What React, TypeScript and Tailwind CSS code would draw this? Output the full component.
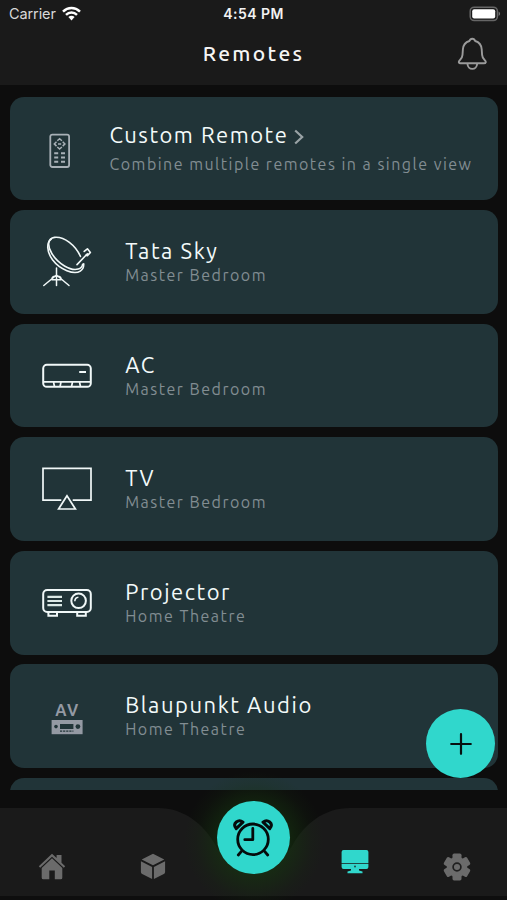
import type { ReactNode } from "react";

const teal = "#30d7cc";

function RemoteIcon() {
  return (
    <svg className="mt-1.5" width="22" height="36" viewBox="0 0 22 36" fill="none" stroke="#a8b0b6" strokeWidth="1.8">
      <rect x="1.300" y="1.600" width="18.800" height="32.400" rx="2" />
      <path d="M8.300 7.800l2.300-2 2.300 2M8.300 14l2.300 2 2.300-2M7.500 8.700l-2.200 2.200 2.200 2.200M13.700 8.700l2.200 2.200-2.200 2.200M9 10.900h3.200" strokeWidth="1.500" />
      <path d="M5.200 20.300h4M12 20.300h4M5.200 24.500h4M12 24.500h4M5.200 28.700h4M12 28.700h4" strokeWidth="1.900" />
    </svg>
  );
}

function DishIcon() {
  return (
    <svg className="mt-px" width="50" height="52" viewBox="0 0 50 52" fill="none" stroke="#f1f8f8" strokeWidth="1.6" strokeLinecap="round" strokeLinejoin="round">
      <path d="M38.500 20.500C33.500 9.500 22.500.4 12.500 1.400 5.400 2.200 5.200 10 9.800 17.500c6.200 10.200 18.800 17.800 26.500 15.500 2.600-.8 4-2.400 4.300-4.700" />
      <path d="M9.300 3.200C4.200 6.500 4.600 15.500 10.500 23.800c7.500 10 21.500 15.300 27.800 11.300 2.500-1.600 3.600-4.200 3.400-7.300" />
      <path d="M35 28.600L45.400 17.800M42.200 15.400l3.200-2.600 3 3.600-3 3.400-1.600-.6" />
      <path d="M14.500 32v17.500M1.800 49.500l12.700-10.500L27 49.500M10 43.800h9M9.900 42.600c.8-3.600 8.400-3.600 9.200 0" strokeWidth="1.500" />
    </svg>
  );
}

function AcIcon() {
  return (
    <svg width="50" height="26" viewBox="0 0 50 26" fill="none" stroke="#f1f8f8" strokeWidth="2">
      <rect x="1.200" y="1.800" width="47.600" height="22" rx="3.600" />
      <path d="M1.500 18.800h47M11.500 19l1 4.700M19 19l-1 4.700M30.500 19l-1 4.700M37.500 19l1 4.700" strokeWidth="1.700" />
      <path d="M37.200 9h6.800" strokeWidth="2" />
    </svg>
  );
}

function TvIcon() {
  return (
    <svg width="50" height="44" viewBox="0 0 50 44" fill="none" stroke="#f1f8f8" strokeWidth="1.7">
      <path d="M19.300 33.200H1V1.300h48v31.900H30.700" />
      <path d="M25 28.800L16.600 42h16.800z" />
    </svg>
  );
}

function ProjectorIcon() {
  return (
    <svg width="50" height="30" viewBox="0 0 50 30" fill="none" stroke="#f1f8f8" strokeWidth="2">
      <rect x="1.200" y="2" width="47.600" height="22" rx="4" />
      <path d="M6.400 24.200v3.600h8.600v-3.600M35.200 24.200v3.600h8.600v-3.600" />
      <path d="M5.400 8.900h14.600M5.400 13h14.600M5.400 17.100h14.600" strokeWidth="2.200" stroke="#dce9e6" />
      <circle cx="36.600" cy="12.800" r="7.300" />
      <path d="M32.800 13.200c.1-2.200 1.400-3.700 3.600-3.900" strokeWidth="1.500" />
    </svg>
  );
}

function AvIcon() {
  return (
    <div className="mt-1.5 flex h-8 flex-col items-center">
      <span className="h-[17px] pl-0.5 text-[16px] font-bold leading-[14px] tracking-[1.5px] text-[#9499a3]">AV</span>
      <svg width="32" height="15" viewBox="0 0 32 15">
        <path fill="#9499a3" d="M.6 0h31v14.200H.6z" />
        <circle cx="5" cy="6.600" r="1.800" fill="#213438" />
        <circle cx="26.900" cy="6.600" r="2.400" fill="#213438" />
        <path d="M9 4h13.400v5H9z" fill="#213438" />
        <path d="M9 11.200h13.400" stroke="#213438" strokeWidth="1.200" strokeDasharray="2.200 .9" />
      </svg>
    </div>
  );
}

function Device({ name, room, icon }: { name: string; room: string; icon: ReactNode }) {
  return (
    <li className="flex h-[103.7px] shrink-0 items-center rounded-[14px] bg-[#213438] pl-8">
      <div className="flex w-[50px] justify-center">{icon}</div>
      <div className="mb-0.5 ml-[33.7px] whitespace-nowrap">
        <h2 className="text-[22px] leading-7 tracking-[1.55px] text-[#f3fafa]">{name}</h2>
        <p className="text-[16px] leading-5 tracking-[1.5px] text-[#828d92]">{room}</p>
      </div>
    </li>
  );
}

export default function App() {
  return (
    <div className="relative flex h-[900px] w-[507px] flex-col overflow-hidden bg-[#0d0d0d] font-['Ubuntu','Noto_Sans',sans-serif]">
      <header className="h-[85px] shrink-0 bg-[#1a1a1a]">
        <div className="grid h-7 grid-cols-3 items-center pl-[9px] pr-[6px] font-['Inter',sans-serif]">
          <div className="flex items-center gap-[6px] text-[14.5px] text-[#d8d8d8]">
            <span className="tracking-[-0.1px]">Carrier</span>
            <svg className="-mt-0.5" width="19" height="15" viewBox="0 0 19 15" fill="none" stroke="#fff" strokeWidth="2.5">
              <path d="M1 5.600c4.900-4.700 12.100-4.700 17 0M4 8.800c3.100-3 7.900-3 11 0" />
              <path d="M6.400 11.100c1.800-1.700 4.400-1.700 6.200 0L9.500 14.400z" fill="#fff" stroke="none" />
            </svg>
          </div>
          <span className="-ml-[3px] -mt-px whitespace-nowrap text-center text-[14px] font-semibold tracking-[0.45px] text-[#f2f2f2]">4:54 PM</span>
          <svg className="-mt-px justify-self-end" width="32" height="16" viewBox="0 0 32 16">
            <rect x="1.200" y="1.200" width="27.200" height="13.400" rx="4" fill="none" stroke="#666" strokeWidth="1.500" />
            <rect x="3.200" y="3.200" width="23" height="9.400" rx="2" fill="#fff" />
            <path d="M29.600 5.500c2 .8 2 3.600 0 4.400z" fill="#777" />
          </svg>
        </div>
        <div className="grid h-[52px] grid-cols-[1fr_auto_1fr] items-center">
          <span />
          <h1 className="text-[21px] font-medium tracking-[2.350px] text-[#f5f5f5]">Remotes</h1>
          <svg className="mr-5 justify-self-end" width="30" height="34" viewBox="0 0 30 34" fill="none" stroke="#9b9b9b" strokeWidth="1.9" strokeLinejoin="round">
            <path d="M15.300 1.700c-1.500 0-2.400.8-2.900 2.300-4 1.200-6.200 4.300-6.500 8.300l-.4 5.600c-.2 2.700-1 4-2.700 5.400-1.700 1.500-1 3 .8 3h23.400c1.800 0 2.500-1.500.8-3-1.700-1.400-2.500-2.700-2.700-5.400l-.4-5.600c-.3-4-2.500-7.100-6.500-8.300-.5-1.500-1.400-2.300-2.900-2.300z" />
            <path d="M10.400 26.500c.4 7.200 9.400 7.200 9.800 0" />
          </svg>
        </div>
      </header>

      <ul className="flex h-[705px] shrink-0 flex-col gap-[9.9px] overflow-hidden px-[9.5px] pt-[11.5px]">
        <li className="flex h-[103.7px] shrink-0 items-center rounded-[14px] bg-[#213438] pl-[39px]">
          <RemoteIcon />
          <div className="ml-[39px] mt-[3px] whitespace-nowrap">
            <h2 className="flex items-center text-[22px] leading-[28px] tracking-[1.500px] text-[#f3fafa]">
              Custom Remote
              <svg className="ml-[6px] mt-1" width="10" height="16" viewBox="0 0 10 16" fill="none" stroke="#9aa3a6" strokeWidth="2.200">
                <path d="M1.200 1.500l7 6.500-7 6.500" />
              </svg>
            </h2>
            <p className="pt-px text-[16px] leading-[29px] tracking-[1.480px] text-[#828d92]">Combine multiple remotes in a single view</p>
          </div>
        </li>
        <Device name="Tata Sky" room="Master Bedroom" icon={<DishIcon />} />
        <Device name="AC" room="Master Bedroom" icon={<AcIcon />} />
        <Device name="TV" room="Master Bedroom" icon={<TvIcon />} />
        <Device name="Projector" room="Home Theatre" icon={<ProjectorIcon />} />
        <Device name="Blaupunkt Audio" room="Home Theatre" icon={<AvIcon />} />
        <li className="h-[103.7px] shrink-0 rounded-[14px] bg-[#213438]" />
      </ul>

      <nav className="relative mt-[18px] h-[92px]">
        <svg className="absolute inset-x-0 -top-[50px]" width="507" height="142" viewBox="0 0 507 142">
          <defs>
            <radialGradient id="glow" gradientUnits="userSpaceOnUse" cx="254" cy="83" r="70">
              <stop offset=".45" stopColor="#15350f" stopOpacity=".65" />
              <stop offset=".65" stopColor="#15320f" stopOpacity=".4" />
              <stop offset=".83" stopColor="#15300f" stopOpacity=".14" />
              <stop offset="1" stopColor="#15300f" stopOpacity="0" />
            </radialGradient>
          </defs>
          <path d="M0 50h158c26 0 46 16 58 38 18 28 58 28 76 0 12-22 32-38 58-38h157v88H0z" fill="#1a1a1a" />
          <path d="M0 138h507v4H0z" fill="#0e0e0e" />
          <circle cx="254" cy="83" r="70" fill="url(#glow)" />
        </svg>
        <div className="relative grid h-full grid-cols-5 justify-items-center">
          <svg className="ml-0.5 mt-[45px]" width="28" height="27" viewBox="0 0 28 27" fill="#6b6b6b">
            <path d="M.8 13.200L14 .8l4.600 4.300V2h4.900v7.700l3.700 3.500-1.400 1.500L14 3.700 2.200 14.700z" />
            <path d="M14 5.300l10.300 9.600v9.800a1.500 1.500 0 0 1-1.500 1.500h-6v-8.700h-5.500v8.700H5.200a1.500 1.500 0 0 1-1.500-1.500v-9.800z" />
          </svg>
          <svg className="ml-0.5 mt-[45px]" width="26" height="27" viewBox="0 0 26 27" fill="#6b6b6b">
            <path d="M13 .8L24.300 6.500 13 12.300 1.700 6.500zM.9 8.200l11.200 5.700v12.200L2.200 21a2.200 2.200 0 0 1-1.300-2zM25.100 8.200l-11.200 5.700v12.200l9.900-5.100a2.200 2.200 0 0 0 1.300-2z" />
          </svg>
          <div className="-mt-[7.500px] flex size-[73.500px] items-center justify-center rounded-full bg-[#30d7cc]">
            <svg className="mt-px" width="42" height="42" viewBox="0 0 42 42" fill="none" stroke="#050b0b" strokeWidth="2.800" strokeLinecap="round" strokeLinejoin="round">
              <circle cx="21" cy="22.300" r="15.300" />
              <path d="M20.800 11.500v11.200h-8M9.600 34.200L6.300 38M32.400 34.200l3.300 3.800" />
              <path d="M4.200 11.600C-.2 6.200 6.600 1.600 11 5.100zM37.800 11.600C42.200 6.200 35.400 1.600 31 5.100z" strokeWidth="3" />
            </svg>
          </div>
          <svg className="mt-[41px]" width="28" height="25" viewBox="0 0 28 25" fill={teal}>
            <path d="M2.600 1h22.800a2 2 0 0 1 2 2v11H.6V3a2 2 0 0 1 2-2zM.6 14.700h26.800V18a2 2 0 0 1-2 2H18v1.500l3.500 1v1.700h-15v-1.700l3.500-1V20H2.600a2 2 0 0 1-2-2z" />
            <circle cx="14" cy="17.500" r=".9" fill="#183b39" />
          </svg>
          <svg className="ml-px mt-[45px]" width="28" height="28" viewBox="0 0 28 28" fill="#6b6b6b">
            <circle cx="14" cy="14" r="10.300" />
            <rect x="9.500" y=".6" width="9" height="26.800" rx="1.600" />
            <rect x="9.500" y=".6" width="9" height="26.800" rx="1.600" transform="rotate(60 14 14)" />
            <rect x="9.500" y=".6" width="9" height="26.800" rx="1.600" transform="rotate(120 14 14)" />
            <circle cx="14" cy="14" r="3.900" stroke="#1f1f1f" strokeWidth="1.700" />
          </svg>
        </div>
      </nav>

      <button className="absolute left-[426px] top-[709px] flex size-[69px] items-center justify-center rounded-full bg-[#30d7cc]">
        <svg width="22" height="22" viewBox="0 0 22 22" stroke="#071010" strokeWidth="2.200" strokeLinecap="round">
          <path d="M11 1.200v19.600M1.200 11h19.600" />
        </svg>
      </button>
    </div>
  );
}
